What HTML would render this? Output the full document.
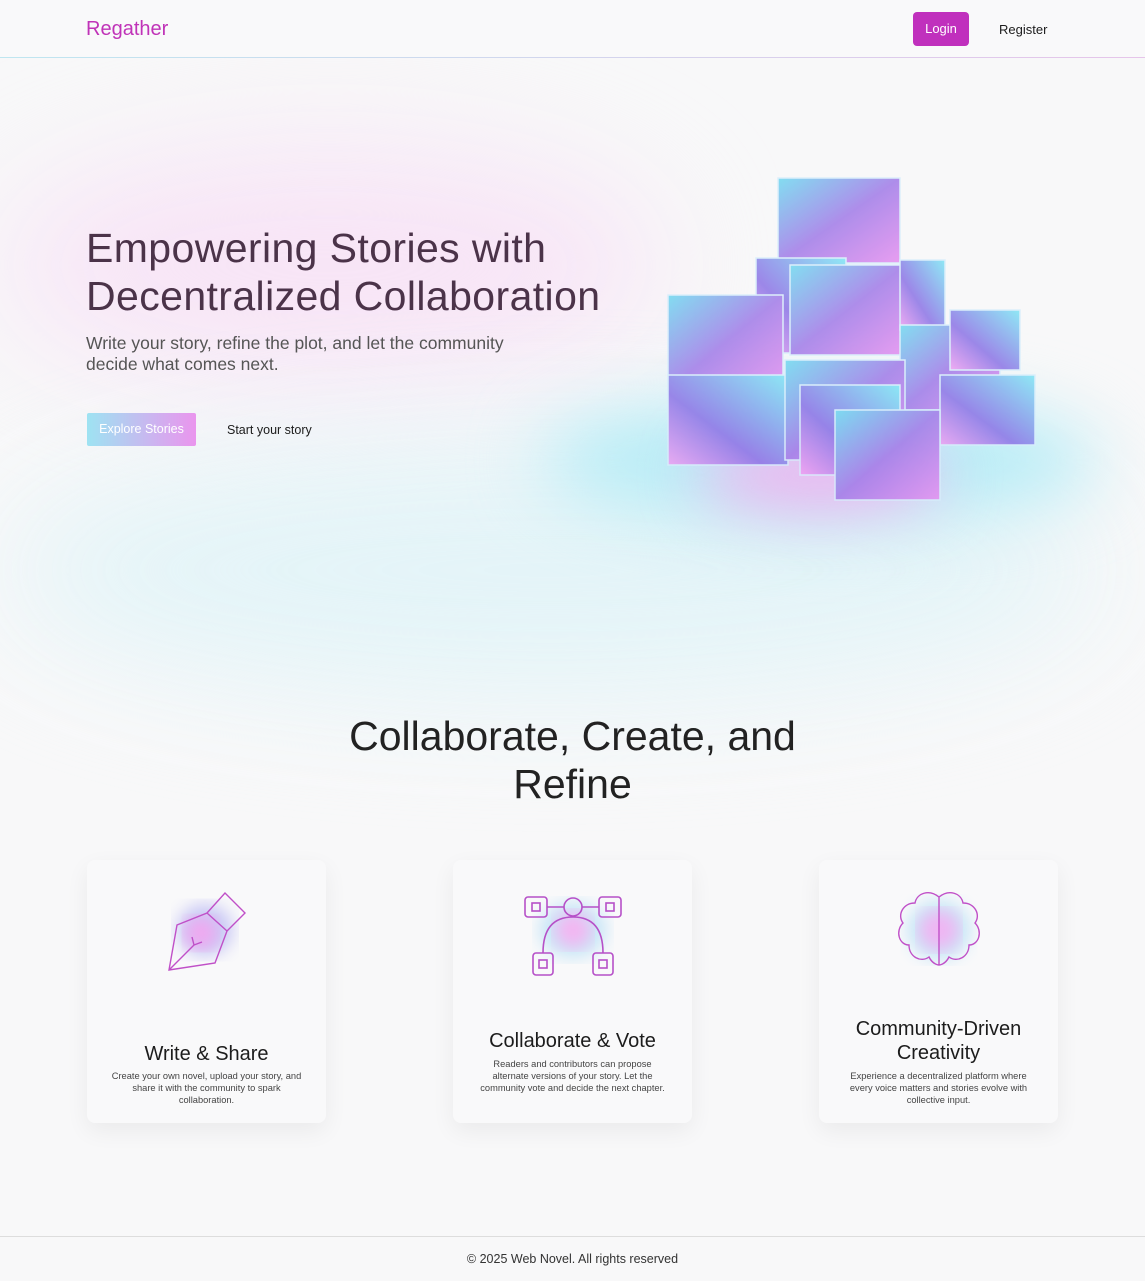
<!DOCTYPE html>
<html><head><meta charset="utf-8"><style>
*{margin:0;padding:0;box-sizing:border-box}
body{width:1145px;height:1280px;background:#f8f8f9;font-family:"Liberation Sans",sans-serif;position:relative;overflow:hidden;color:#1c1c1c}
.hdr{position:absolute;left:0;top:0;width:1145px;height:58px;border-bottom:1px solid;border-image:linear-gradient(90deg,#bfe6f0,#e6c5ea) 1;background:#f9f9fa;z-index:3}
.logo{position:absolute;left:86px;top:18px;font-size:20px;color:#c033b8}
.login{position:absolute;left:913px;top:12px;width:56px;height:34px;background:#c030bd;border-radius:4px;color:#fff;font-size:13px;text-align:center;line-height:34px}
.reg{position:absolute;left:999px;top:22px;font-size:13px}
.blob{position:absolute;border-radius:50%;filter:blur(60px)}
h1{position:absolute;left:86px;top:224px;font-size:41px;line-height:48px;font-weight:normal;color:#4b3349;letter-spacing:.4px}
.sub{position:absolute;left:86px;top:333px;font-size:17.5px;line-height:21px;color:#555;width:450px}
.exp{position:absolute;left:87px;top:413px;width:109px;height:33px;background:linear-gradient(90deg,#9ee3f2,#ea95ee);color:#fff;font-size:12.5px;line-height:33px;text-align:center;border-radius:2px}
.start{position:absolute;left:227px;top:423px;font-size:12.5px}
h2{position:absolute;left:0;width:1145px;top:712px;text-align:center;font-size:41px;line-height:48px;font-weight:normal;color:#222}
.card{position:absolute;top:860px;width:239px;height:263px;background:#f9f9fa;border-radius:8px;box-shadow:0 8px 24px rgba(0,0,0,.06);text-align:center}
.card h3{position:absolute;left:0;width:100%;font-size:20px;font-weight:normal;line-height:24px}
.card p{position:absolute;left:22px;width:195px;font-size:9.3px;line-height:12px;color:#444}
.ic{position:absolute;left:70px;top:25px;width:100px;height:100px;overflow:visible}
.foot{position:absolute;left:0;top:1236px;width:1145px;height:44px;border-top:1px solid #ddd;text-align:center;font-size:12.5px;line-height:44px;color:#333}
</style></head><body>
<div class="blob" style="left:0;top:150px;width:660px;height:230px;background:#f7e4f6"></div>
<div class="blob" style="left:0;top:440px;width:1100px;height:260px;background:#e2f4f8;opacity:.9"></div>
<div class="blob" style="left:540px;top:400px;width:560px;height:120px;background:#b6ecf6;filter:blur(35px)"></div>
<div class="blob" style="left:700px;top:440px;width:240px;height:70px;background:#f2b3f0;filter:blur(30px)"></div>
<div class="hdr"><div class="logo">Regather</div><div class="login">Login</div><div class="reg">Register</div></div>
<h1>Empowering Stories with<br>Decentralized Collaboration</h1>
<div class="sub">Write your story, refine the plot, and let the community decide what comes next.</div>
<div class="exp">Explore Stories</div><div class="start">Start your story</div>
<svg style="position:absolute;left:660px;top:170px" width="390" height="340">
<defs><linearGradient id="g" x1="0" y1="0" x2="1" y2="1"><stop offset="0" stop-color="#6fd9f0"/><stop offset=".5" stop-color="#a17be8"/><stop offset="1" stop-color="#e58ef0"/></linearGradient>
<linearGradient id="h" x1="1" y1="0" x2="0" y2="1"><stop offset="0" stop-color="#7ee6f5"/><stop offset=".6" stop-color="#8c74e6"/><stop offset="1" stop-color="#f0a0f2"/></linearGradient></defs>
<g stroke="#d8eefc" stroke-width="1.5" opacity=".85">
<rect x="118" y="8" width="122" height="85" fill="url(#g)"/>
<rect x="96" y="88" width="90" height="95" fill="url(#h)"/>
<rect x="130" y="95" width="115" height="90" fill="url(#g)"/>
<rect x="240" y="90" width="45" height="70" fill="url(#h)"/>
<rect x="8" y="125" width="115" height="95" fill="url(#g)"/>
<rect x="240" y="155" width="100" height="85" fill="url(#g)"/>
<rect x="290" y="140" width="70" height="60" fill="url(#h)"/>
<rect x="8" y="205" width="120" height="90" fill="url(#h)"/>
<rect x="125" y="190" width="120" height="100" fill="url(#g)"/>
<rect x="140" y="215" width="100" height="90" fill="url(#h)"/>
<rect x="280" y="205" width="95" height="70" fill="url(#h)"/>
<rect x="175" y="240" width="105" height="90" fill="url(#g)"/>
</g></svg>
<h2>Collaborate, Create, and<br>Refine</h2>
<div class="card" style="left:87px">
<svg class="ic" viewBox="0 0 100 100"><defs><filter id="b"><feGaussianBlur stdDeviation="8"/></filter></defs><ellipse cx="48" cy="45" rx="28" ry="26" fill="#c9c8f5" filter="url(#b)"/><circle cx="44" cy="48" r="16" fill="#f0a8f0" filter="url(#b)"/>
<path d="M12 85 L20 40 L50 28 L68 8 L88 28 L70 46 L58 78 Z M50 28 L70 46 M12 85 L37 60 M37 60 l-2 -8 M37 60 l8 -3" fill="none" stroke="#c050c8" stroke-width="1.4"/></svg>
<h3 style="top:182px">Write &amp; Share</h3><p style="top:210px">Create your own novel, upload your story, and share it with the community to spark collaboration.</p></div>
<div class="card" style="left:453px">
<svg class="ic" viewBox="0 0 100 100"><ellipse cx="50" cy="45" rx="34" ry="28" fill="#c9e6f7" filter="url(#b)"/><circle cx="50" cy="45" r="18" fill="#f3b6f2" filter="url(#b)"/>
<g fill="none" stroke="#b650c8" stroke-width="1.6"><rect x="2" y="12" width="22" height="20" rx="3"/><rect x="76" y="12" width="22" height="20" rx="3"/><circle cx="50" cy="22" r="9"/><path d="M24 22h17M59 22h17M20 68 Q20 32 50 32 Q80 32 80 68"/><rect x="10" y="68" width="20" height="22" rx="3"/><rect x="70" y="68" width="20" height="22" rx="3"/><rect x="9" y="18" width="8" height="8"/><rect x="83" y="18" width="8" height="8"/><rect x="16" y="75" width="8" height="8"/><rect x="76" y="75" width="8" height="8"/></g></svg>
<h3 style="top:169px">Collaborate &amp; Vote</h3><p style="top:198px">Readers and contributors can propose alternate versions of your story. Let the community vote and decide the next chapter.</p></div>
<div class="card" style="left:819px">
<svg class="ic" viewBox="0 0 100 100"><ellipse cx="50" cy="45" rx="32" ry="30" fill="#c9e6f7" filter="url(#b)"/><circle cx="50" cy="45" r="20" fill="#efb6f3" filter="url(#b)"/>
<path d="M50 12 C40 4 28 8 26 18 C14 18 8 30 14 38 C6 46 10 60 20 60 C20 72 32 78 40 72 C44 80 50 80 50 80 C50 80 56 80 60 72 C68 78 80 72 80 60 C90 60 94 46 86 38 C92 30 86 18 74 18 C72 8 60 4 50 12 Z M50 12 V80" fill="none" stroke="#c050c8" stroke-width="1.4"/></svg>
<h3 style="top:157px">Community-Driven<br>Creativity</h3><p style="top:210px">Experience a decentralized platform where every voice matters and stories evolve with collective input.</p></div>
<div class="foot">© 2025 Web Novel. All rights reserved</div>
</body></html>
